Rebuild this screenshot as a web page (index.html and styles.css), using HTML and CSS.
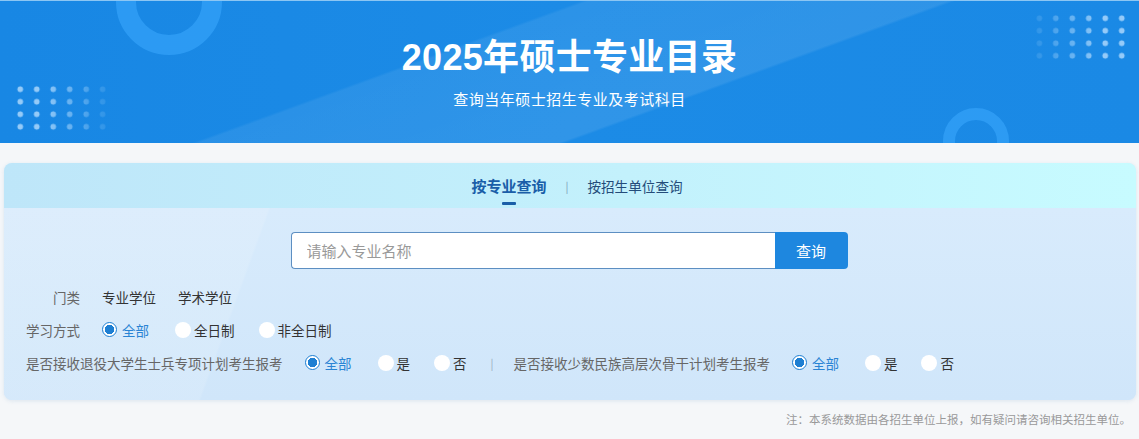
FILE: index.html
```html
<!DOCTYPE html>
<html lang="zh-CN">
<head>
<meta charset="utf-8">
<title>2025年硕士专业目录</title>
<link rel="stylesheet" href="styles.css">
</head>
<body>
<header class="banner">
  <div class="ring ring-top"></div>
  <div class="ring ring-bottom"></div>
  <div class="dots dots-left"></div>
  <div class="dots dots-right"></div>
  <h1 class="title">2025年硕士专业目录</h1>
  <p class="subtitle">查询当年硕士招生专业及考试科目</p>
</header>
<main class="main">
  <section class="card">
    <nav class="tabs">
      <span class="tab active">按专业查询</span>
      <span class="tab-sep">|</span>
      <span class="tab">按招生单位查询</span>
    </nav>
    <div class="card-body">
      <div class="search">
        <input class="search-input" type="text" placeholder="请输入专业名称">
        <button class="search-btn">查询</button>
      </div>
      <div class="row">
        <span class="label">门类</span>
        <span class="opt">专业学位</span>
        <span class="opt">学术学位</span>
      </div>
      <div class="row">
        <span class="label">学习方式</span>
        <span class="radio on"><i></i>全部</span>
        <span class="radio"><i></i>全日制</span>
        <span class="radio"><i></i>非全日制</span>
      </div>
      <div class="row">
        <span class="label long">是否接收退役大学生士兵专项计划考生报考</span>
        <span class="radio on"><i></i>全部</span>
        <span class="radio"><i></i>是</span>
        <span class="radio"><i></i>否</span>
        <span class="row-sep">|</span>
        <span class="label long">是否接收少数民族高层次骨干计划考生报考</span>
        <span class="radio on"><i></i>全部</span>
        <span class="radio"><i></i>是</span>
        <span class="radio"><i></i>否</span>
      </div>
    </div>
  </section>
  <p class="note">注：本系统数据由各招生单位上报，如有疑问请咨询相关招生单位。</p>
</main>
</body>
</html>
```
FILE: styles.css
```css
* { box-sizing: border-box; }
body {
  margin: 0;
  background: #f5f7f9;
  font-family: "Noto Sans CJK SC", "Noto Sans", sans-serif;
  color: #333;
}
.banner {
  position: relative;
  height: 143px;
  overflow: hidden;
  border-top: 1px solid #8cc6f3;
  background:
    linear-gradient(160deg, rgba(255,255,255,0) 0%, rgba(255,255,255,0) 38%, rgba(255,255,255,0.07) 38.5%, rgba(255,255,255,0.09) 62%, rgba(255,255,255,0) 62.5%),
    linear-gradient(90deg, #1887e4 0%, #1c8be6 50%, #1a89e5 100%);
  text-align: center;
  color: #fff;
}
.ring {
  position: absolute;
  border-radius: 50%;
  border-style: solid;
  border-color: rgba(60,170,255,0.55);
}
.ring-top {
  left: 116px; top: -52px;
  width: 106px; height: 106px;
  border-width: 20px;
}
.ring-bottom {
  left: 943px; top: 107px;
  width: 66px; height: 66px;
  border-width: 12px;
}
.dots {
  position: absolute;
  width: 100px; height: 52px;
  background-image: radial-gradient(circle, rgba(190,225,255,0.75) 2.6px, transparent 3.2px);
  background-size: 16.5px 12.5px;
}
.dots-left {
  left: 12px; top: 82px;
  -webkit-mask-image: linear-gradient(90deg, #000 30%, rgba(0,0,0,0.1) 100%);
  mask-image: linear-gradient(90deg, #000 30%, rgba(0,0,0,0.1) 100%);
}
.dots-right {
  left: 1031px; top: 11px;
  -webkit-mask-image: linear-gradient(270deg, #000 30%, rgba(0,0,0,0.1) 100%);
  mask-image: linear-gradient(270deg, #000 30%, rgba(0,0,0,0.1) 100%);
}
.title {
  position: relative;
  margin: 0;
  padding-top: 33px;
  font-family: "Liberation Sans", "Noto Sans CJK SC", sans-serif;
  font-size: 36px;
  line-height: 48px;
  font-weight: 700;
  letter-spacing: 0.3px;
}
.subtitle {
  position: relative;
  margin: 6px 0 0;
  font-size: 15px;
  line-height: 22px;
  letter-spacing: 0.5px;
}
.main {
  padding: 20px 3px 0 4px;
}
.card {
  border-radius: 8px;
  overflow: hidden;
  box-shadow: 0 1px 4px rgba(120,160,200,0.2);
  background: linear-gradient(180deg, #d8ecfd 0%, #d0e6fa 100%);
}
.tabs {
  height: 45px;
  display: flex;
  justify-content: center;
  align-items: center;
  gap: 19px;
  padding-left: 14px;
  background: linear-gradient(90deg, #bee6f9 0%, #c3f1fc 55%, #c7fbff 100%);
}
.tab {
  position: relative;
  font-size: 13.6px;
  color: #244c7a;
  line-height: 20px;
}
.tab.active {
  font-size: 15px;
  font-weight: 700;
  color: #1a5ea8;
}
.tab.active::after {
  content: "";
  position: absolute;
  left: 50%;
  bottom: -9px;
  width: 14px;
  height: 3px;
  margin-left: -7px;
  background: #1a5ea8;
  border-radius: 1px;
}
.tab-sep {
  color: #7a9ab8;
  font-size: 11px;
}
.card-body {
  padding: 24px 0 21px 22px;
  background:
    linear-gradient(110deg, rgba(255,255,255,0.12) 0%, rgba(255,255,255,0.12) 22%, rgba(255,255,255,0) 22.2%),
    linear-gradient(180deg, #d8ebfc 0%, #d0e6fa 100%);
}
.search {
  display: flex;
  justify-content: center;
  margin-left: -24px;
  margin-bottom: 11px;
}
.search-input {
  width: 484px;
  height: 37px;
  border: 1px solid #5d8fc2;
  border-right: none;
  border-radius: 4px 0 0 4px;
  padding: 0 15px;
  font-family: inherit;
  font-size: 15px;
  color: #333;
  background: #fff;
  outline: none;
}
.search-input::placeholder { color: #999; }
.search-btn {
  width: 73px;
  height: 37px;
  border: none;
  border-radius: 0 4px 4px 0;
  background: #1e87df;
  color: #fff;
  font-family: inherit;
  font-size: 15px;
}
.row {
  display: flex;
  align-items: center;
  height: 33px;
  font-size: 13.5px;
}
.label {
  width: 54px;
  text-align: right;
  margin-right: 22px;
  color: #666;
  white-space: nowrap;
}
.label.long { width: auto; text-align: left; }
.opt {
  margin-right: 22px;
  color: #333;
}
.radio {
  display: flex;
  align-items: center;
  margin-right: 24px;
  color: #333;
}
.radio i {
  width: 16px;
  height: 16px;
  border-radius: 50%;
  background: #fff;
  margin-right: 3px;
  flex: none;
}
.radio.on { color: #2a84d4; margin-right: 26px; }
.radio.on i {
  width: 15px;
  height: 15px;
  margin-right: 5px;
  border: 1px solid #1e7fd2;
  background: radial-gradient(circle, #1e7fd2 0 4.5px, #fff 5px);
}
.row-sep {
  color: #9ab;
  font-size: 11px;
  margin: 0 20px 0 0;
}
.note {
  margin: 11px 5px 0 0;
  text-align: right;
  font-size: 11.5px;
  color: #999;
}
```
